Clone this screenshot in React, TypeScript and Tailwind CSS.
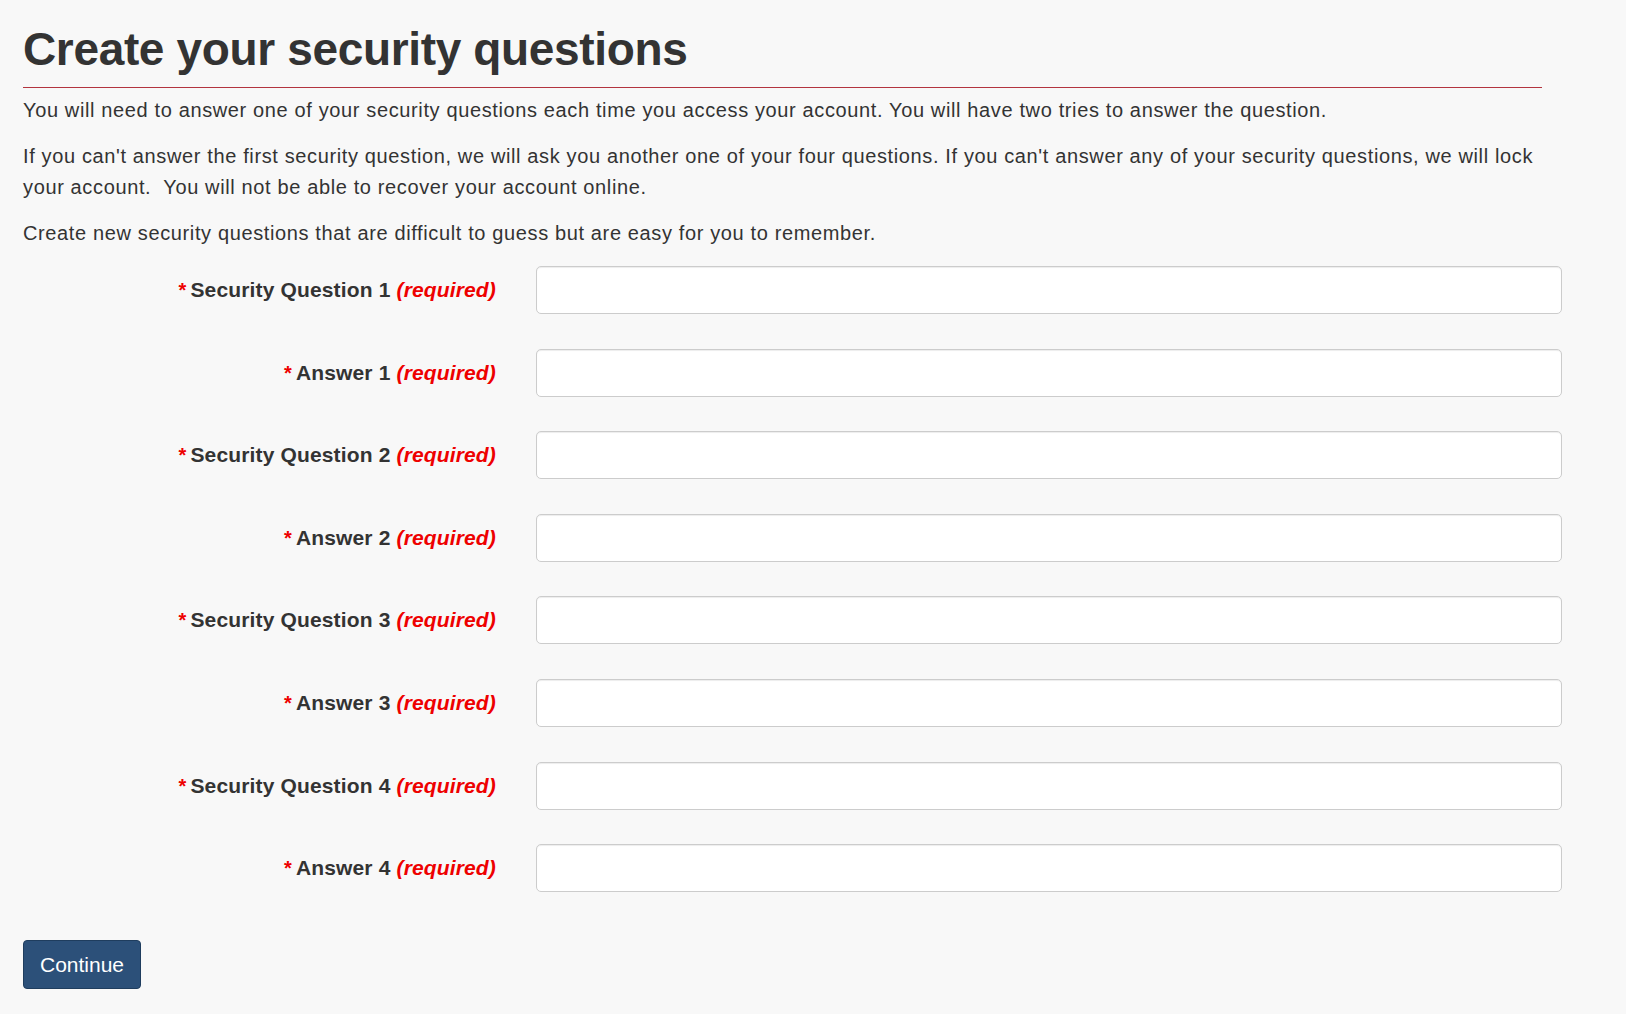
export default function App() {
  const fields = [
    "Security Question 1",
    "Answer 1",
    "Security Question 2",
    "Answer 2",
    "Security Question 3",
    "Answer 3",
    "Security Question 4",
    "Answer 4",
  ];

  return (
    <div className="min-h-screen bg-[#f8f8f8] font-['Liberation_Sans',Arial,sans-serif] text-[#333] pl-[23px] pt-[24px]">
      {/* Header */}
      <h1 className="w-[1519px] text-[46px] leading-[50px] font-bold tracking-[-0.35px] text-[#333]">
        Create your security questions
      </h1>
      <div className="w-[1519px] h-px bg-[#b3343f] mt-[13px]" />

      {/* Intro */}
      <div className="w-[1519px] mt-[7px] text-[20px] leading-[31px] tracking-[0.63px]">
        <p className="mb-[15px]">
          You will need to answer one of your security questions each time you access your account. You will have two
          tries to answer the question.
        </p>
        <p className="mb-[15px]">
          If you can't answer the first security question, we will ask you another one of your four questions. If you
          can't answer any of your security questions, we will lock your account.&nbsp; You will not be able to recover
          your account online.
        </p>
        <p>Create new security questions that are difficult to guess but are easy for you to remember.</p>
      </div>

      {/* Form */}
      <form className="mt-[17px] flex flex-col gap-y-[34.6px]" onSubmit={(e) => e.preventDefault()}>
        {fields.map((label) => (
          <div key={label} className="flex items-center h-[48px]">
            <label className="w-[473px] text-right text-[21px] font-bold leading-[48px] tracking-[0.15px] text-[#333]">
              <span className="text-[#e00] text-[20px] mr-[4px]">*</span>
              {label}{" "}
              <em className="text-[#e00] font-bold italic">(required)</em>
            </label>
            <input
              type="text"
              className="ml-[40px] w-[1026px] h-[48px] bg-white border border-[#ccc] rounded-[5px] shadow-[inset_0_1px_1px_rgba(0,0,0,0.075)] px-3 text-[20px] outline-none"
            />
          </div>
        ))}
      </form>

      {/* Action */}
      <button
        type="button"
        className="mt-[48px] w-[118px] h-[49px] bg-[#2c5079] border border-[#1f3d5e] rounded-[4px] text-white text-[21px] leading-none"
      >
        Continue
      </button>
    </div>
  );
}
